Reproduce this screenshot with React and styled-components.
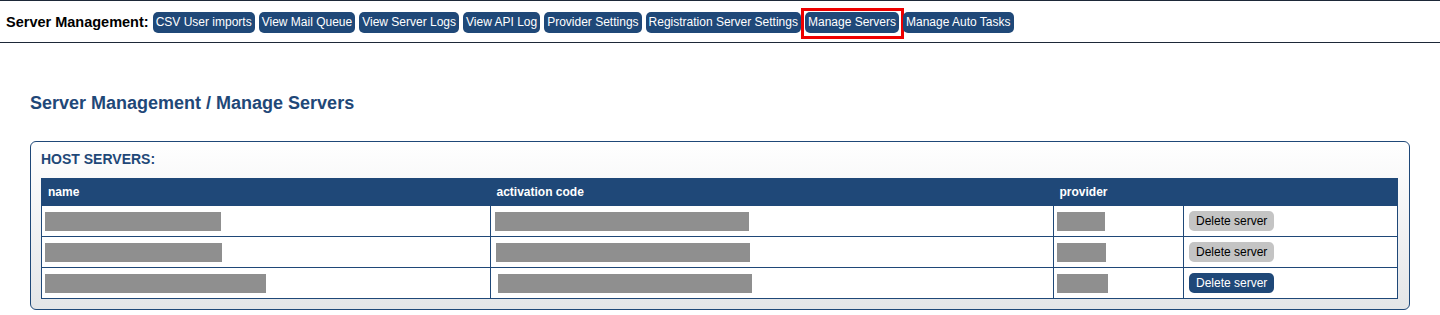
import React from 'react';
import styled, { createGlobalStyle } from 'styled-components';

const GlobalStyle = createGlobalStyle`
  body {
    margin: 0;
    background: #ffffff;
    font-family: "Liberation Sans", Arial, sans-serif;
  }
`;

const NavBar = styled.div`
  display: flex;
  align-items: center;
  height: 41px;
  padding-left: 6px;
  border-top: 1px solid #1d2838;
  border-bottom: 1px solid #1d2838;
`;

const NavLabel = styled.span`
  font-size: 14.5px;
  font-weight: bold;
  color: #000;
  margin-right: 4px;
`;

const NavButton = styled.button`
  position: relative;
  height: 21px;
  margin: 1px 4px 0 0;
  padding: 0 3px;
  border: none;
  border-radius: 5px;
  background: #1f4878;
  color: #fff;
  font-family: "Liberation Sans", Arial, sans-serif;
  font-size: 12px;
  cursor: pointer;

  /* square red highlight drawn over the active tab */
  &::after {
    content: '';
    display: ${(p) => (p.$active ? 'block' : 'none')};
    position: absolute;
    inset: -4px -5px -6px -4px;
    border: 3px solid #ee0000;
    pointer-events: none;
  }
`;

const Content = styled.div`
  padding: 49px 30px 0;
`;

const Heading = styled.h2`
  margin: 0 0 27px;
  font-size: 18px;
  line-height: 22px;
  color: #1f4878;
`;

const Panel = styled.div`
  border: 1px solid #1f4878;
  border-radius: 6px;
  padding: 7px 11px 10px 10px;
  background: linear-gradient(#ffffff, #e4e5e7);
`;

const PanelTitle = styled.div`
  font-size: 14px;
  font-weight: bold;
  color: #1f4878;
  line-height: 20px;
  margin-bottom: 9px;
`;

const Table = styled.table`
  width: 100%;
  table-layout: fixed;
  border-collapse: collapse;
  border: 1px solid #1f4878;
  background: #fff;
`;

const HeadCell = styled.th`
  height: 26px;
  padding: 0 6px;
  background: #1f4878;
  color: #fff;
  font-size: 12px;
  font-weight: bold;
  text-align: left;
`;

const Cell = styled.td`
  height: 30px;
  padding: 0 3px;
  border: 1px solid #1f4878;
  vertical-align: middle;
`;

const Redacted = styled.div`
  width: ${(p) => p.$w}px;
  height: 19px;
  margin-left: ${(p) => p.$x || 0}px;
  background: #8f8f8f;
`;

const DeleteButton = styled.button`
  height: 20px;
  padding: 0 7px;
  margin-left: 2px;
  border: none;
  border-radius: 5px;
  background: ${(p) => (p.$primary ? '#1f4878' : '#c4c4c4')};
  color: ${(p) => (p.$primary ? '#fff' : '#000')};
  font-family: "Liberation Sans", Arial, sans-serif;
  font-size: 12px;
  cursor: pointer;
`;

const navItems = [
  'CSV User imports',
  'View Mail Queue',
  'View Server Logs',
  'View API Log',
  'Provider Settings',
  'Registration Server Settings',
  'Manage Servers',
  'Manage Auto Tasks',
];

const columns = [
  { label: 'name', width: 449 },
  { label: 'activation code', width: 563 },
  { label: 'provider', width: 130 },
  { label: '', width: null },
];

const servers = [
  { name: 176, code: 254, codeX: 1, provider: 48 },
  { name: 177, code: 254, codeX: 2, provider: 49 },
  { name: 221, code: 254, codeX: 4, provider: 51 },
];

const App = () => (
  <>
    <GlobalStyle />
    <NavBar>
      <NavLabel>Server Management:</NavLabel>
      {navItems.map((item) => (
        <NavButton key={item} $active={item === 'Manage Servers'}>
          {item}
        </NavButton>
      ))}
    </NavBar>
    <Content>
      <Heading>Server Management / Manage Servers</Heading>
      <Panel>
        <PanelTitle>HOST SERVERS:</PanelTitle>
        <Table>
          <colgroup>
            {columns.map((c, i) => (
              <col key={i} style={c.width ? { width: c.width } : undefined} />
            ))}
          </colgroup>
          <thead>
            <tr>
              {columns.map((c, i) => (
                <HeadCell key={i}>{c.label}</HeadCell>
              ))}
            </tr>
          </thead>
          <tbody>
            {servers.map((s, i) => (
              <tr key={i}>
                <Cell>
                  <Redacted $w={s.name} />
                </Cell>
                <Cell>
                  <Redacted $w={s.code} $x={s.codeX} />
                </Cell>
                <Cell>
                  <Redacted $w={s.provider} />
                </Cell>
                <Cell>
                  <DeleteButton $primary={i === servers.length - 1}>Delete server</DeleteButton>
                </Cell>
              </tr>
            ))}
          </tbody>
        </Table>
      </Panel>
    </Content>
  </>
);

export default App;
